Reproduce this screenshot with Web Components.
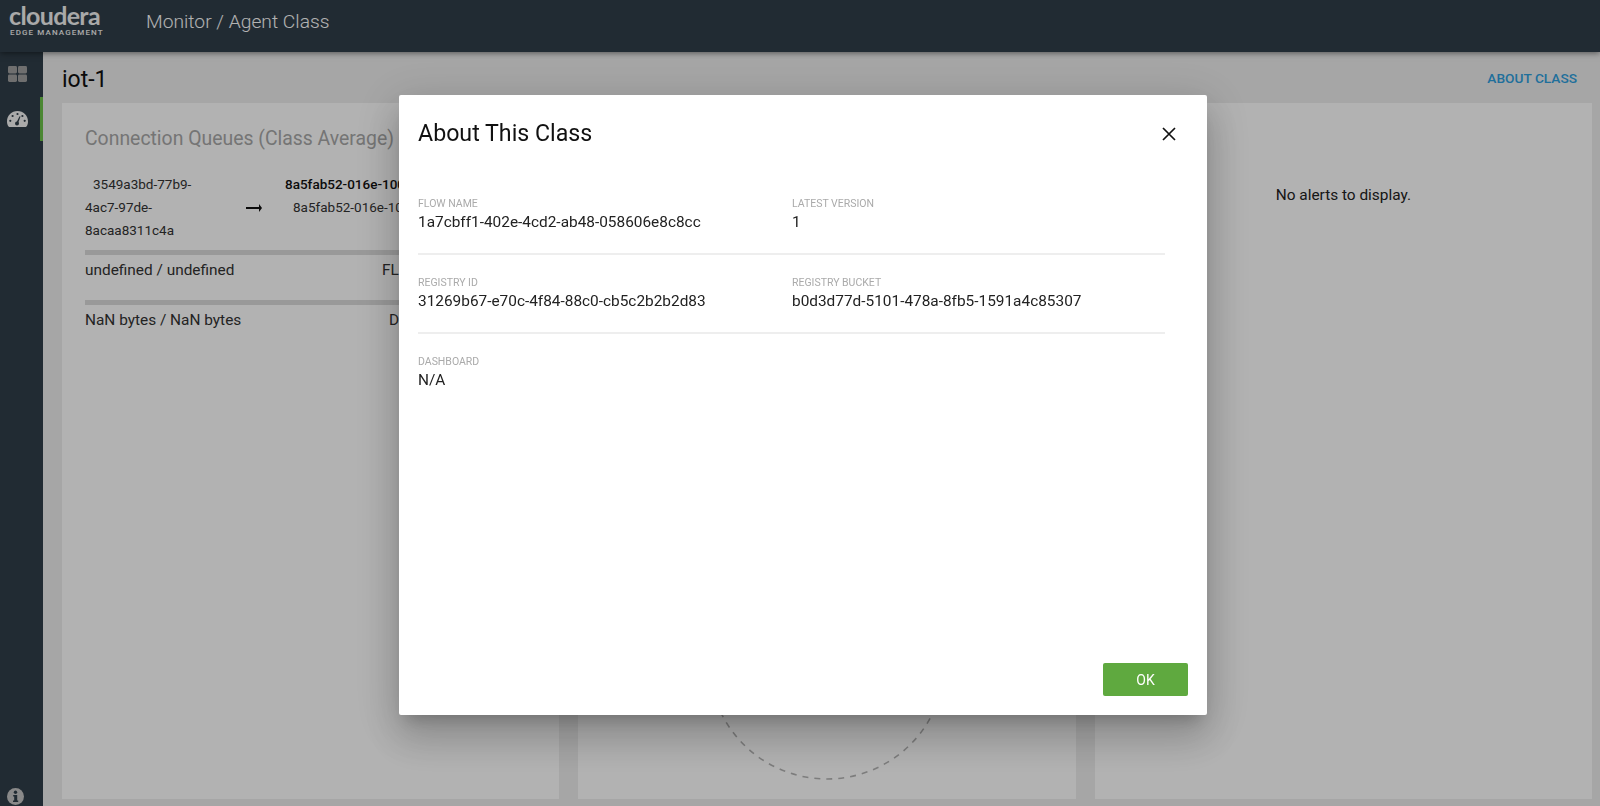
<!DOCTYPE html>
<html>
<head>
<meta charset="utf-8">
<title>Monitor / Agent Class</title>
<style>
    html, body { margin: 0; height: 100%; overflow: hidden; }
    body { font-family: Roboto, "Liberation Sans", sans-serif; font-size: 14px; color: #222; background: #eee; }
    .shell { height: 806px; display: flex; flex-direction: column; }
    .body { flex: 1; display: flex; min-height: 0; }
</style>
</head>
<body>
<div class="shell">
    <app-header>Monitor / Agent Class</app-header>
    <div class="body">
        <app-sidebar></app-sidebar>
        <class-page name="iot-1"></class-page>
    </div>
</div>
<about-dialog></about-dialog>

<script>
class AppHeader extends HTMLElement {
    constructor() {
        super();
        this.attachShadow({ mode: 'open' });
        this.shadowRoot.innerHTML = `
            <style>
                :host {
                    display: flex;
                    flex: none;
                    align-items: center;
                    height: 52px;
                    background: #303e49;
                    color: #fff;
                    box-shadow: 0 1px 6px rgba(0, 0, 0, .5);
                    position: relative;
                    z-index: 2;
                }
                .logo { width: 146px; padding-left: 9px; box-sizing: border-box; margin-top: -13px; }
                .word {
                    font: 700 25px/24px Lato, sans-serif;
                    letter-spacing: -.65px;
                    color: #f2f2f2;
                }
                .sub {
                    font: 500 8px/9px Roboto, sans-serif;
                    letter-spacing: 1.12px;
                    color: #f2f2f2;
                    margin-top: 1px;
                    padding-left: 1px;
                    white-space: nowrap;
                }
                .title { font-size: 19.25px; font-weight: 300; margin-top: -10px; color: #fff; }
            </style>
            <div class="logo">
                <div class="word">cloudera</div>
                <div class="sub">EDGE MANAGEMENT</div>
            </div>
            <div class="title"><slot></slot></div>
        `;
    }
}

class AppSidebar extends HTMLElement {
    constructor() {
        super();
        this.attachShadow({ mode: 'open' });
        this.shadowRoot.innerHTML = `
            <style>
                :host {
                    display: flex;
                    flex: none;
                    flex-direction: column;
                    width: 43px;
                    background: #303e49;
                }
                .item {
                    height: 45px;
                    display: flex;
                    align-items: center;
                    justify-content: center;
                    box-sizing: border-box;
                    border-right: 3px solid transparent;
                    padding: 0 5px 2px 0;
                }
                .item.active { height: 44px; border-right-color: #6cc24a; padding: 0 6px 0 0; }
                .info { margin-top: auto; display: flex; justify-content: center; padding: 0 12px 1px 0; }
                svg { display: block; }
            </style>
            <div class="item">
                <svg width="19" height="16" viewBox="0 0 19 16" fill="#9f9f9f">
                    <rect x="0" y="0" width="9" height="7.4" rx="1.4"/>
                    <rect x="10" y="0" width="9" height="7.4" rx="1.4"/>
                    <rect x="0" y="8.6" width="9" height="7.4" rx="1.4"/>
                    <rect x="10" y="8.6" width="9" height="7.4" rx="1.4"/>
                </svg>
            </div>
            <div class="item active">
                <svg width="21" height="16" viewBox="0 0 21 16">
                    <path fill="#f4f4f4" d="M10.5 0C4.7 0 0 4.6 0 10.4c0 1.9.5 3.7 1.5 5.2.2.3.5.4.8.4h16.4c.3 0 .6-.1.8-.4 1-1.5 1.5-3.3 1.5-5.2C21 4.6 16.3 0 10.5 0z"/>
                    <g fill="#303e49">
                        <circle cx="10.5" cy="3" r="1.1"/>
                        <circle cx="5.6" cy="5" r="1.1"/>
                        <circle cx="3.3" cy="9.8" r="1.1"/>
                        <circle cx="17.7" cy="9.8" r="1.1"/>
                        <circle cx="15.4" cy="5" r="1.1"/>
                        <circle cx="10" cy="12.6" r="2"/>
                        <path d="M9.2 12 12.6 5.2l.9.4-2.6 7.2z"/>
                    </g>
                </svg>
            </div>
            <div class="info">
                <svg width="17" height="17" viewBox="0 0 17 17">
                    <circle cx="8.5" cy="8.5" r="8.5" fill="#c4c4c4"/>
                    <g fill="#303e49">
                        <circle cx="8.5" cy="4.2" r="1.7"/>
                        <path d="M6.2 7h4v5.6h1V14H6v-1.4h1.2V8.4h-1z"/>
                    </g>
                </svg>
            </div>
        `;
    }
}

class InfoCard extends HTMLElement {
    constructor() {
        super();
        this.attachShadow({ mode: 'open' });
        this.shadowRoot.innerHTML = `
            <style>
                :host {
                    display: flex;
                    flex-direction: column;
                    min-width: 0;
                    background: #fff;
                    box-sizing: border-box;
                    overflow: hidden;
                }
            </style>
            <slot></slot>
        `;
    }
}

class QueueBar extends HTMLElement {
    constructor() {
        super();
        this.attachShadow({ mode: 'open' });
        const label = this.getAttribute('label');
        const type = this.getAttribute('type');
        const offset = this.getAttribute('offset');
        this.shadowRoot.innerHTML = `
            <style>
                :host { display: block; }
                .bar { height: 5px; background: #dcdcdc; }
                .row { display: flex; line-height: 20px; padding-top: 5px; font-size: 15.4px; }
                .label { flex: 0 0 ${offset}px; }
            </style>
            <div class="bar"></div>
            <div class="row"><span class="label">${label}</span><span>${type}</span></div>
        `;
    }
}

class QueueCard extends HTMLElement {
    constructor() {
        super();
        this.attachShadow({ mode: 'open' });
        this.shadowRoot.innerHTML = `
            <style>
                :host {
                    display: block;
                    padding: 25px 23px 0;
                    height: 100%;
                    box-sizing: border-box;
                    color: #333;
                }
                h2 { margin: 0; font-size: 19.4px; font-weight: 400; line-height: 22px; color: #a8a8a8; white-space: nowrap; }
                .flow {
                    display: grid;
                    grid-template-columns: 200px 200px;
                    align-items: center;
                    margin-top: 23px;
                    line-height: 23px;
                    font-size: 13.5px;
                }
                .src { display: flex; align-items: center; white-space: nowrap; }
                .lead { padding-left: 8px; }
                .arrow { margin-left: 51px; flex: none; }
                .dest { white-space: nowrap; margin-top: -23px; }
                .dest b { font-weight: 500; color: #111; display: block; }
                .dest span { padding-left: 8px; }
                .left { flex: none; width: 110px; }
                queue-bar { margin-top: 8px; }
                queue-bar + queue-bar { margin-top: 20px; }
            </style>
            <h2>Connection Queues (Class Average)</h2>
            <div class="flow">
                <div class="src">
                    <div class="left">
                        <div class="lead">3549a3bd-77b9-</div>
                        <div>4ac7-97de-</div>
                        <div>8acaa8311c4a</div>
                    </div>
                    <svg class="arrow" width="16" height="8" viewBox="0 0 16 8">
                        <path fill="#111" d="M0 3.1h13V0l3 4-3 4V4.9H0z"/>
                    </svg>
                </div>
                <div class="dest">
                    <b>8a5fab52-016e-1000</b>
                    <span>8a5fab52-016e-1000</span>
                </div>
            </div>
            <queue-bar label="undefined / undefined" type="FL" offset="297"></queue-bar>
            <queue-bar label="NaN bytes / NaN bytes" type="D" offset="304"></queue-bar>
        `;
    }
}

class GaugeCard extends HTMLElement {
    constructor() {
        super();
        this.attachShadow({ mode: 'open' });
        this.shadowRoot.innerHTML = `
            <style>
                :host {
                    display: flex;
                    height: 100%;
                    flex-direction: column;
                    justify-content: flex-end;
                    align-items: center;
                    padding-bottom: 19px;
                    box-sizing: border-box;
                }
                svg { display: block; }
            </style>
            <svg width="238" height="238" viewBox="0 0 238 238">
                <circle cx="119" cy="119" r="118" fill="none" stroke="#b4b4b4" stroke-width="1.6" stroke-dasharray="6 6"/>
            </svg>
        `;
    }
}

class AlertsCard extends HTMLElement {
    constructor() {
        super();
        this.attachShadow({ mode: 'open' });
        this.shadowRoot.innerHTML = `
            <style>
                :host {
                    display: block;
                    padding-top: 82px;
                    text-align: center;
                    font-size: 15.4px;
                    line-height: 20px;
                    color: #222;
                }
            </style>
            <slot></slot>
        `;
    }
}

class ClassPage extends HTMLElement {
    constructor() {
        super();
        this.attachShadow({ mode: 'open' });
        this.shadowRoot.innerHTML = `
            <style>
                :host {
                    display: flex;
                    flex: 1;
                    min-width: 0;
                    flex-direction: column;
                    padding: 0 8px 7px 19px;
                    box-sizing: border-box;
                }
                .top { display: flex; justify-content: space-between; align-items: center; height: 51px; flex: none; }
                h1 { margin: 3px 0 0; font-size: 23px; font-weight: 400; color: #111; }
                a { font-size: 13.7px; font-weight: 500; color: #2ea0df; text-transform: uppercase; margin-right: 15px; text-decoration: none; }
                .cards { flex: 1; display: grid; grid-template-columns: repeat(3, 1fr); gap: 19px; min-height: 0; }
            </style>
            <div class="top">
                <h1>${this.getAttribute('name')}</h1>
                <a href="#">About Class</a>
            </div>
            <div class="cards">
                <info-card><queue-card></queue-card></info-card>
                <info-card><gauge-card></gauge-card></info-card>
                <info-card><alerts-card>No alerts to display.</alerts-card></info-card>
            </div>
        `;
    }
}

class AboutField extends HTMLElement {
    constructor() {
        super();
        this.attachShadow({ mode: 'open' });
        this.shadowRoot.innerHTML = `
            <style>
                :host { display: block; min-width: 0; }
                .label { font-size: 10.5px; line-height: 14px; color: #aaa; text-transform: uppercase; }
                .value { font-size: 15.4px; line-height: 20px; color: #222; margin-top: 1px; }
            </style>
            <div class="label">${this.getAttribute('label')}</div>
            <div class="value"><slot></slot></div>
        `;
    }
}

class AboutDialog extends HTMLElement {
    constructor() {
        super();
        this.attachShadow({ mode: 'open' });
        this.shadowRoot.innerHTML = `
            <style>
                :host {
                    position: fixed;
                    inset: 0;
                    z-index: 10;
                    display: flex;
                    justify-content: center;
                    align-items: flex-start;
                    background: rgba(0, 0, 0, .3);
                }
                .dialog {
                    width: 808px;
                    height: 620px;
                    margin: 95px 0 0 6px;
                    box-sizing: border-box;
                    padding: 0 19px 19px;
                    background: #fff;
                    border-radius: 2px;
                    display: flex;
                    flex-direction: column;
                    box-shadow: 0 11px 15px -7px rgba(0,0,0,.2), 0 24px 38px 3px rgba(0,0,0,.14), 0 9px 46px 8px rgba(0,0,0,.12);
                }
                .head { display: flex; justify-content: space-between; align-items: center; height: 76px; flex: none; }
                h2 { margin: 0; font-size: 23.2px; font-weight: 400; color: #111; }
                .close { margin: 1px 12px 0 0; display: block; }
                .rows { margin-top: 26px; width: 747px; }
                .row {
                    display: grid;
                    grid-template-columns: 374px 1fr;
                    height: 79px;
                    box-sizing: border-box;
                    padding-top: 21px;
                }
                .row:first-child { height: 58px; padding-top: 0; }
                .row.line { border-bottom: 2px solid #eee; }
                .foot { margin-top: auto; display: flex; justify-content: flex-end; }
                button {
                    width: 85px;
                    height: 33px;
                    border: 0;
                    border-radius: 2px;
                    background: #5fa93f;
                    color: #fff;
                    font: 400 14px Roboto, sans-serif;
                }
            </style>
            <div class="dialog">
                <div class="head">
                    <h2>About This Class</h2>
                    <svg class="close" width="14" height="14" viewBox="0 0 14 14">
                        <path d="M1 1l12 12M13 1 1 13" stroke="#111" stroke-width="1.7" fill="none"/>
                    </svg>
                </div>
                <div class="rows">
                    <div class="row line">
                        <about-field label="Flow Name">1a7cbff1-402e-4cd2-ab48-058606e8c8cc</about-field>
                        <about-field label="Latest Version">1</about-field>
                    </div>
                    <div class="row line">
                        <about-field label="Registry ID">31269b67-e70c-4f84-88c0-cb5c2b2b2d83</about-field>
                        <about-field label="Registry Bucket">b0d3d77d-5101-478a-8fb5-1591a4c85307</about-field>
                    </div>
                    <div class="row">
                        <about-field label="Dashboard">N/A</about-field>
                    </div>
                </div>
                <div class="foot"><button>OK</button></div>
            </div>
        `;
    }
}

customElements.define('app-header', AppHeader);
customElements.define('app-sidebar', AppSidebar);
customElements.define('info-card', InfoCard);
customElements.define('queue-bar', QueueBar);
customElements.define('queue-card', QueueCard);
customElements.define('gauge-card', GaugeCard);
customElements.define('alerts-card', AlertsCard);
customElements.define('class-page', ClassPage);
customElements.define('about-field', AboutField);
customElements.define('about-dialog', AboutDialog);
</script>
</body>
</html>
